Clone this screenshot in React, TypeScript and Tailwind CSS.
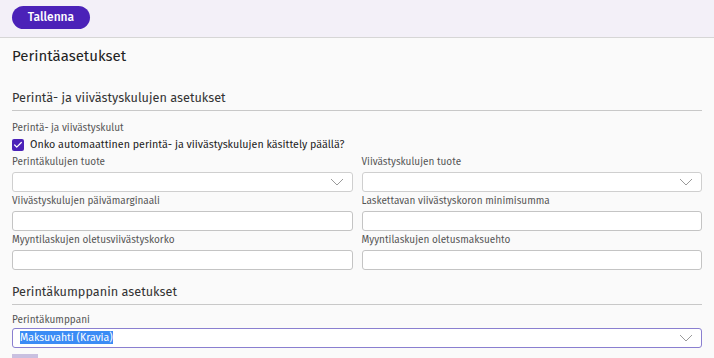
import { Check } from 'lucide-react';

const font = { fontFamily: '"Fira Sans", "Open Sans", "Noto Sans", sans-serif' };

function Label({ children }: { children: React.ReactNode }) {
  return <div className="text-[10px] leading-[14px] text-[#555] mb-[3px]">{children}</div>;
}

function Chevron() {
  return (
    <svg width="14" height="8" viewBox="0 0 14 8" fill="none" className="shrink-0">
      <polyline points="1,1 7,7 13,1" stroke="#9a9a9a" strokeWidth="1" />
    </svg>
  );
}

function SelectBox({ value, highlighted }: { value?: string; highlighted?: boolean }) {
  return (
    <div
      className={`h-[20px] bg-white rounded-[3px] border flex items-center justify-between pl-[7px] pr-[8px] ${
        highlighted ? 'border-[#8a7fd0]' : 'border-[#cfcfcf]'
      }`}
    >
      <span className="text-[10.5px] leading-[14px]">
        {value && <span className="bg-[#3b8cf5] text-white">{value}</span>}
      </span>
      <Chevron />
    </div>
  );
}

function TextBox() {
  return <div className="h-[20px] bg-white rounded-[3px] border border-[#c4c4c4]" />;
}

function Field({ label, children }: { label: string; children: React.ReactNode }) {
  return (
    <div>
      <Label>{label}</Label>
      {children}
    </div>
  );
}

export default function App() {
  return (
    <div className="w-[714px] h-[358px] overflow-hidden bg-[#fafafa] text-[#222]" style={font}>
      {/* Toolbar */}
      <div className="h-[38px] bg-[#f3f0f8] border-b border-[#d6d6d6] px-[12px] pt-[4px]">
        <button className="h-[23px] w-[78px] rounded-full bg-[#4b22b8] text-white text-[12px] font-medium">
          Tallenna
        </button>
      </div>

      <div className="px-[12px]">
        <h1 className="text-[15px] leading-[18px] mt-[9px]">Perintäasetukset</h1>

        <h2 className="text-[12.7px] leading-[18px] text-[#333] mt-[24px] pb-[3px] border-b border-[#c8c8c8]">
          Perintä- ja viivästyskulujen asetukset
        </h2>

        <div className="mt-[10px]">
          <Label>Perintä- ja viivästyskulut</Label>
          <div className="flex items-center gap-[6px] -mt-[1px]">
            <span className="w-[12px] h-[12px] rounded-[2px] bg-[#4b22b8] flex items-center justify-center">
              <Check size={10} strokeWidth={3} className="text-white" />
            </span>
            <span className="text-[10.7px] leading-[16px]">
              Onko automaattinen perintä- ja viivästyskulujen käsittely päällä?
            </span>
          </div>
        </div>

        <div className="grid grid-cols-2 gap-x-[9px] gap-y-[2px] mt-[2px]">
          <Field label="Perintäkulujen tuote">
            <SelectBox />
          </Field>
          <Field label="Viivästyskulujen tuote">
            <SelectBox />
          </Field>
          <Field label="Viivästyskulujen päivämarginaali">
            <TextBox />
          </Field>
          <Field label="Laskettavan viivästyskoron minimisumma">
            <TextBox />
          </Field>
          <Field label="Myyntilaskujen oletusviivästyskorko">
            <TextBox />
          </Field>
          <Field label="Myyntilaskujen oletusmaksuehto">
            <TextBox />
          </Field>
        </div>

        <h2 className="text-[12.7px] leading-[18px] text-[#333] mt-[13px] pb-[3px] border-b border-[#c8c8c8]">
          Perintäkumppanin asetukset
        </h2>

        <div className="mt-[8px]">
          <div className="text-[10px] leading-[14px] text-[#555] mb-[1px]">Perintäkumppani</div>
          <SelectBox value="Maksuvahti (Kravia)" highlighted />
        </div>

        <div className="mt-[6px] w-[26px] h-[10px] bg-[#c9c0e0]" />
      </div>
    </div>
  );
}
